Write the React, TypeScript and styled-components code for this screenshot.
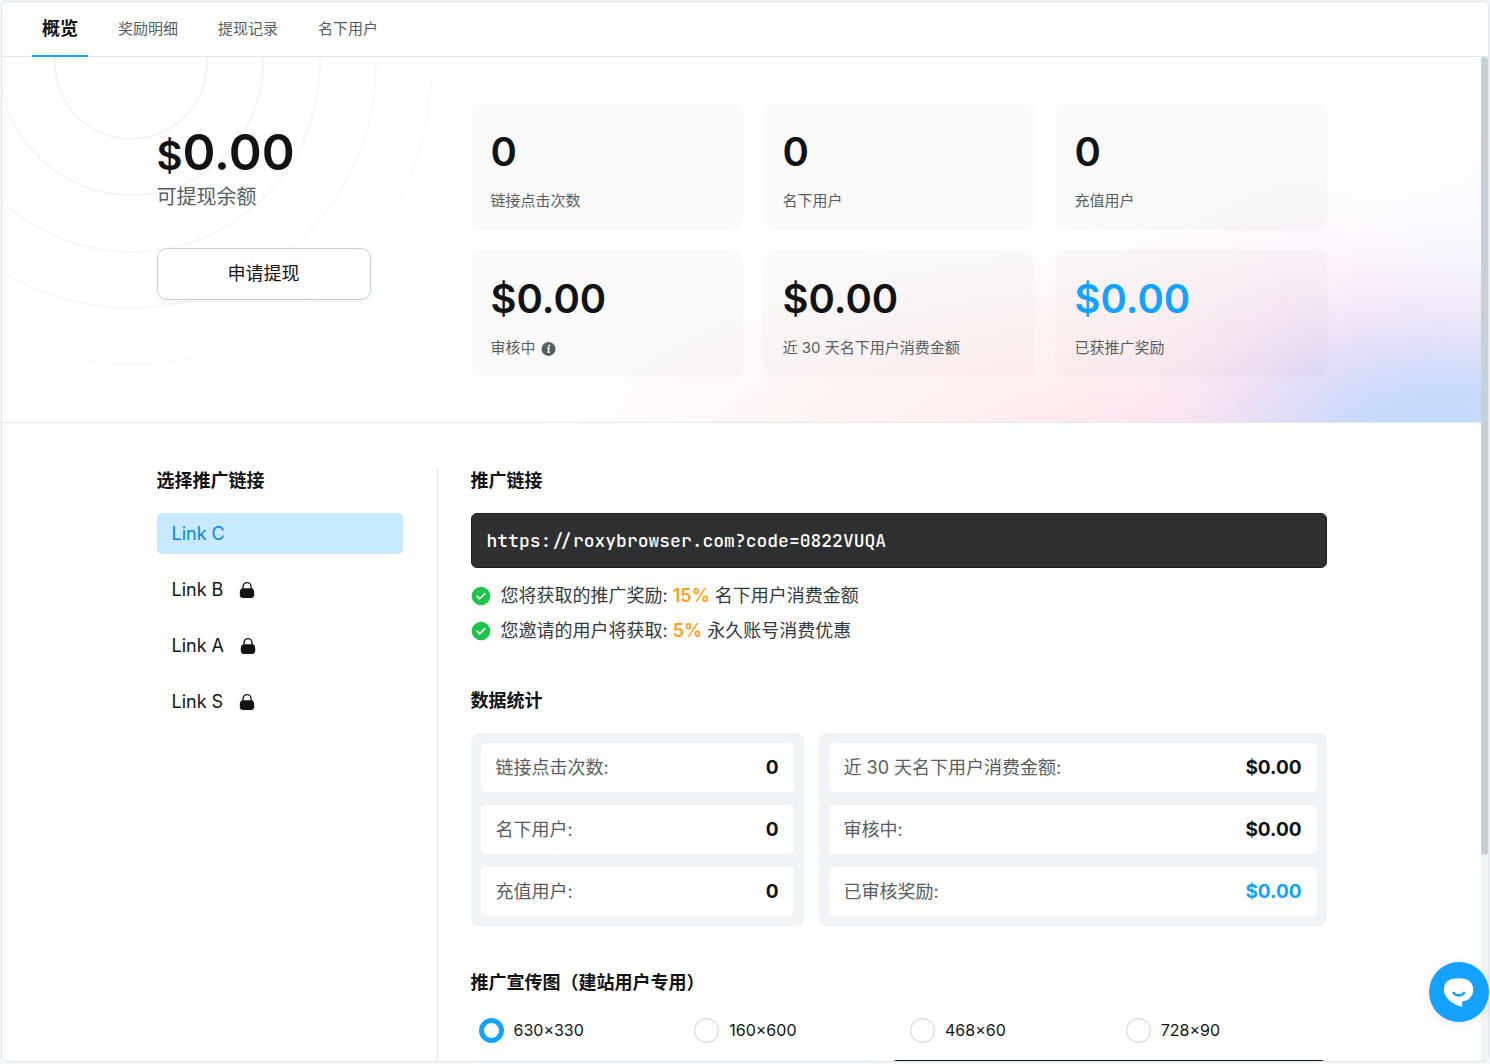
import { useLayoutEffect, useRef, useState } from 'react';
import styled, { createGlobalStyle } from 'styled-components';

const c = {
  page: '#f3f8fc',
  line: '#dfe8ef',
  ink: '#111314',
  soft: '#565e62',
  body: '#333a3e',
  blue: '#14a2ff',
  link: '#0a87e0',
  orange: '#ff9f1a',
  green: '#20c44c',
  panel: '#f0f4f7',
  dark: '#2d2f31',
  ctl: '#c6d1d7',
};

const GlobalStyle = createGlobalStyle`
  *, *::before, *::after { box-sizing: border-box; }
  body {
    margin: 0;
    background: ${c.page};
    color: ${c.ink};
    font-family: Inter, "Noto Sans CJK SC", sans-serif;
    font-size: 18px;
    line-height: 26px;
  }
  button { font: inherit; color: inherit; cursor: pointer; }
  h2, p, ul, dl, dd { margin: 0; padding: 0; }
  ul { list-style: none; }
`;

const Frame = styled.div`
  height: 100vh;
  padding: 1px 1px 2px;
`;

const Window = styled.div`
  display: flex;
  flex-direction: column;
  height: 100%;
  overflow: hidden;
  background: #fff;
  border: 1px solid ${c.line};
  border-radius: 6px;
`;

const TabBar = styled.nav`
  flex: none;
  display: flex;
  gap: 20px;
  height: 55px;
  padding: 0 30px;
  border-bottom: 1px solid ${c.line};
`;

const Tab = styled.button<{ $active?: boolean }>`
  height: 55px;
  padding: 0 10px;
  background: none;
  border: 0;
  border-bottom: 2px solid ${(p) => (p.$active ? c.blue : 'transparent')};
  color: ${(p) => (p.$active ? c.ink : c.soft)};
  font-size: ${(p) => (p.$active ? 18 : 15)}px;
  font-weight: ${(p) => (p.$active ? 700 : 400)};
`;

const Viewport = styled.div`
  flex: 1;
  min-height: 0;
  display: flex;
`;

const Scroller = styled.div`
  flex: 1;
  min-width: 0;
  overflow-y: auto;
  scrollbar-width: none;
`;

const Track = styled.div`
  flex: none;
  width: 7px;
  background: ${c.panel};
`;

const Thumb = styled.div`
  border-radius: 4px;
  background: ${c.ctl};
`;

const Hero = styled.section`
  position: relative;
  overflow: hidden;
  padding: 46px 24px 45px;
  border-bottom: 1px solid ${c.line};
  background:
    radial-gradient(ellipse 230px 130px at 98% 106%, rgba(194, 220, 255, 1), rgba(194, 218, 254, 0.8) 40%, rgba(200, 216, 252, 0.25) 75%, rgba(210, 216, 250, 0)),
    radial-gradient(ellipse 290px 190px at 95% 106%, rgba(216, 214, 247, 0.9), rgba(222, 218, 246, 0.6) 50%, rgba(232, 220, 246, 0.2) 80%, rgba(240, 226, 248, 0)),
    radial-gradient(ellipse 260px 290px at 106% 94%, rgba(216, 228, 254, 0.6), rgba(226, 230, 254, 0.35) 50%, rgba(240, 242, 255, 0)),
    radial-gradient(ellipse 240px 220px at 89% 84%, rgba(247, 226, 249, 0.6), rgba(249, 234, 252, 0.35) 50%, rgba(250, 240, 255, 0)),
    radial-gradient(ellipse 720px 230px at 83% 108%, rgba(255, 224, 232, 1), rgba(255, 234, 234, 0.6) 50%, rgba(255, 250, 246, 0)),
    #fff;
`;

const Rings = styled.svg`
  position: absolute;
  left: 0;
  top: 0;
`;

const Inner = styled.div`
  position: relative;
  display: flex;
  max-width: 1170px;
  margin: 0 auto;
`;

const Balance = styled.div`
  flex: 0 0 314px;
  padding-top: 19px;
`;

const Amount = styled.p`
  font-size: 50px;
  font-weight: 600;
  line-height: 60px;
`;

const Currency = styled.span`
  font-size: 40px;
  line-height: 1;
`;

const BalanceLabel = styled.p`
  color: ${c.soft};
  font-size: 20px;
  line-height: 30px;
`;

const Withdraw = styled.button`
  width: 214px;
  height: 52px;
  margin-top: 36px;
  background: #fff;
  border: 1px solid ${c.ctl};
  border-radius: 10px;
  box-shadow: 0 2px 4px rgba(0, 0, 0, 0.06);
`;

const Cards = styled.div`
  flex: 1;
  display: grid;
  grid-template-columns: repeat(3, 1fr);
  gap: 20px;
`;

const Card = styled.div`
  padding: 25px 20px 17px;
  border-radius: 10px;
  background: rgba(20, 20, 20, 0.02);
`;

const CardValue = styled.p<{ $accent?: boolean }>`
  margin-bottom: 13px;
  color: ${(p) => (p.$accent ? c.blue : c.ink)};
  font-size: 40px;
  font-weight: 600;
  line-height: 48px;
`;

const CardLabel = styled.p`
  display: flex;
  align-items: center;
  gap: 5px;
  color: ${c.soft};
  font-size: 15px;
  line-height: 24px;
`;

const Columns = styled(Inner)`
  padding-top: 45px;
`;

const Aside = styled.aside`
  flex: 0 0 281px;
  padding-right: 34px;
  border-right: 1px solid ${c.line};
`;

const Main = styled.main`
  flex: 1;
  min-width: 0;
  margin-left: 33px;
  padding-bottom: 24px;
`;

const Title = styled.h2`
  font-size: 18px;
  font-weight: 700;
  line-height: 26px;
`;

const LinkList = styled.ul`
  display: grid;
  gap: 15px;
  margin-top: 19px;
`;

const LinkItem = styled.button<{ $active?: boolean }>`
  display: flex;
  align-items: center;
  gap: 15px;
  width: 100%;
  height: 41px;
  padding: 0 15px;
  border: 0;
  border-radius: 5px;
  background: ${(p) => (p.$active ? '#c8eaff' : 'none')};
  color: ${(p) => (p.$active ? c.link : c.ink)};
`;

const UrlBox = styled.div`
  margin-top: 19px;
  padding: 14px 15px;
  border: 1px solid #1b1d1e;
  border-radius: 6px;
  background: ${c.dark};
  color: #fff;
  font-family: "JetBrains Mono", "DejaVu Sans Mono", monospace;
  font-size: 18px;
  font-weight: 500;
  line-height: 25px;
`;

const Perks = styled.ul`
  display: grid;
  gap: 9px;
  margin-top: 15px;
`;

const Perk = styled.li`
  display: flex;
  align-items: center;
  gap: 10px;
  color: ${c.body};
`;

const Rate = styled.strong`
  color: ${c.orange};
  font-weight: 600;
`;

const Block = styled.section`
  margin-top: 44px;
`;

const Stats = styled.div`
  display: grid;
  grid-template-columns: 333fr 508fr;
  gap: 15px;
  margin-top: 19px;
`;

const StatPanel = styled.dl`
  display: grid;
  gap: 13px;
  padding: 10px;
  border-radius: 8px;
  background: ${c.panel};
`;

const StatRow = styled.div`
  display: flex;
  align-items: center;
  justify-content: space-between;
  height: 49px;
  padding: 0 15px;
  border-radius: 5px;
  background: #fff;
`;

const StatName = styled.dt`
  color: ${c.soft};
`;

const StatValue = styled.dd<{ $accent?: boolean }>`
  color: ${(p) => (p.$accent ? c.blue : c.ink)};
  font-size: 19px;
  font-weight: 700;
`;

const Sizes = styled.div`
  display: grid;
  grid-template-columns: repeat(4, 1fr);
  gap: 15px;
  margin-top: 22px;
  padding-left: 8px;
`;

const SizeOption = styled.label`
  display: flex;
  align-items: center;
  gap: 10px;
  font-size: 16px;
  line-height: 25px;
  cursor: pointer;
`;

const Radio = styled.input`
  appearance: none;
  flex: none;
  width: 25px;
  height: 25px;
  margin: 0;
  border: 1px solid ${c.ctl};
  border-radius: 50%;
  background: #fff;
  &:checked { border: 5px solid ${c.blue}; }
`;

const Previews = styled.div`
  display: grid;
  grid-template-columns: 404fr 436fr;
  gap: 16px;
  margin-top: 17px;
`;

const Preview = styled.div<{ $dark?: boolean }>`
  height: 236px;
  border-radius: 6px;
  background: ${(p) => (p.$dark ? '#1b1d1e' : c.panel)};
`;

const Chat = styled.button`
  position: fixed;
  right: 1px;
  bottom: 42px;
  display: grid;
  place-items: center;
  width: 60px;
  height: 60px;
  padding: 0;
  border: 0;
  border-radius: 50%;
  background: ${c.blue};
  box-shadow: 0 2px 14px rgba(0, 0, 0, 0.08);
`;

const LockIcon = () => (
  <svg width="18" height="18" viewBox="0 0 18 18" fill="none" aria-hidden="true">
    <path d="M5 9V5.6a4 4 0 0 1 8 0V9" stroke={c.ink} strokeWidth="1.3" />
    <path d="M4.2 7.2h9.6c1.6.6 2.4 2 2.4 4.2v2.4c0 2-1 3.2-3 3.2H4.8c-2 0-3-1.2-3-3.2v-2.4c0-2.2.8-3.6 2.4-4.2z" fill={c.ink} />
  </svg>
);

const CheckIcon = () => (
  <svg width="20" height="20" viewBox="0 0 20 20" fill="none" aria-hidden="true">
    <circle cx="10" cy="10" r="9.3" fill={c.green} />
    <path d="M6 10.2l2.7 2.6L13.8 7.7" stroke="#fff" strokeWidth="1.6" strokeLinecap="round" strokeLinejoin="round" />
  </svg>
);

const InfoIcon = () => (
  <svg width="15" height="16" viewBox="0 0 15 16" fill="none" role="img" aria-label="info">
    <circle cx="7.5" cy="8.9" r="7" fill={c.soft} />
    <circle cx="8.2" cy="5.6" r="1.1" fill="#fff" />
    <path d="M6 8h2l-.9 4.2h1.5" stroke="#fff" strokeWidth="1.5" strokeLinejoin="round" />
  </svg>
);

const ChatIcon = () => (
  <svg width="32" height="32" viewBox="0 0 32 32" fill="none" aria-hidden="true">
    <path d="M15.500 2.200C23.500 2.200 30.200 5 30.200 13.600c0 6.800-4.400 11.200-11 12v5.200C9.500 28.600.9 22.400.9 13.600.9 5 7.500 2.200 15.500 2.200z" fill="#fff" />
    <path d="M10.600 17c2.600 3.200 7.800 3.200 10.400 0" stroke={c.blue} strokeWidth="2.600" strokeLinecap="round" />
  </svg>
);

const rings = [
  { r: 76, color: '#f3f3f3' },
  { r: 132, color: '#f5f5f5' },
  { r: 189, color: '#f7f7f7' },
  { r: 245, color: '#f9f9f9' },
  { r: 301, color: '#fbfbfb' },
];

const cards = [
  { value: '0', label: '链接点击次数' },
  { value: '0', label: '名下用户' },
  { value: '0', label: '充值用户' },
  { value: '$0.00', label: '审核中', info: true },
  { value: '$0.00', label: '近 30 天名下用户消费金额' },
  { value: '$0.00', label: '已获推广奖励', accent: true },
];

const countStats = [
  { name: '链接点击次数:', value: '0' },
  { name: '名下用户:', value: '0' },
  { name: '充值用户:', value: '0' },
];

const moneyStats = [
  { name: '近 30 天名下用户消费金额:', value: '$0.00' },
  { name: '审核中:', value: '$0.00' },
  { name: '已审核奖励:', value: '$0.00', accent: true },
];

const tabs = ['概览', '奖励明细', '提现记录', '名下用户'];
const links = ['Link C', 'Link B', 'Link A', 'Link S'];
const sizes = ['630×330', '160×600', '468×60', '728×90'];

export default function App() {
  const scroller = useRef<HTMLDivElement>(null);
  const [thumb, setThumb] = useState({ top: 0, height: 0 });
  const [size, setSize] = useState(sizes[0]);

  const measure = () => {
    const el = scroller.current;
    if (!el) return;
    const ratio = el.clientHeight / el.scrollHeight;
    setThumb({
      top: Math.round(el.scrollTop * ratio),
      height: Math.round(el.clientHeight * ratio),
    });
  };

  useLayoutEffect(() => {
    measure();
    window.addEventListener('resize', measure);
    return () => window.removeEventListener('resize', measure);
  }, []);

  return (
    <Frame>
      <GlobalStyle />
      <Window>
        <TabBar>
          {tabs.map((t, i) => (
            <Tab key={t} $active={i === 0}>{t}</Tab>
          ))}
        </TabBar>
        <Viewport>
          <Scroller ref={scroller} onScroll={measure}>
            <Hero>
              <Rings width="440" height="366" fill="none" aria-hidden="true">
                {rings.map((ring) => (
                  <circle key={ring.r} cx="129" cy="6" r={ring.r} stroke={ring.color} strokeWidth="2" />
                ))}
              </Rings>
              <Inner>
                <Balance>
                  <Amount><Currency>$</Currency>0.00</Amount>
                  <BalanceLabel>可提现余额</BalanceLabel>
                  <Withdraw>申请提现</Withdraw>
                </Balance>
                <Cards>
                  {cards.map((card) => (
                    <Card key={card.label}>
                      <CardValue $accent={card.accent}>{card.value}</CardValue>
                      <CardLabel>{card.label}{card.info && <InfoIcon />}</CardLabel>
                    </Card>
                  ))}
                </Cards>
              </Inner>
            </Hero>
            <Columns>
              <Aside>
                <Title>选择推广链接</Title>
                <LinkList>
                  {links.map((name, i) => (
                    <li key={name}>
                      <LinkItem $active={i === 0}>
                        {name}
                        {i > 0 && <LockIcon />}
                      </LinkItem>
                    </li>
                  ))}
                </LinkList>
              </Aside>
              <Main>
                <Title>推广链接</Title>
                <UrlBox>https://roxybrowser.com?code=0822VUQA</UrlBox>
                <Perks>
                  <Perk><CheckIcon /><span>您将获取的推广奖励: <Rate>15%</Rate> 名下用户消费金额</span></Perk>
                  <Perk><CheckIcon /><span>您邀请的用户将获取: <Rate>5%</Rate> 永久账号消费优惠</span></Perk>
                </Perks>
                <Block>
                  <Title>数据统计</Title>
                  <Stats>
                    <StatPanel>
                      {countStats.map((s) => (
                        <StatRow key={s.name}>
                          <StatName>{s.name}</StatName>
                          <StatValue>{s.value}</StatValue>
                        </StatRow>
                      ))}
                    </StatPanel>
                    <StatPanel>
                      {moneyStats.map((s) => (
                        <StatRow key={s.name}>
                          <StatName>{s.name}</StatName>
                          <StatValue $accent={s.accent}>{s.value}</StatValue>
                        </StatRow>
                      ))}
                    </StatPanel>
                  </Stats>
                </Block>
                <Block>
                  <Title>推广宣传图（建站用户专用）</Title>
                  <Sizes>
                    {sizes.map((s) => (
                      <SizeOption key={s}>
                        <Radio type="radio" name="size" checked={size === s} onChange={() => setSize(s)} />
                        {s}
                      </SizeOption>
                    ))}
                  </Sizes>
                  <Previews>
                    <Preview />
                    <Preview $dark />
                  </Previews>
                </Block>
              </Main>
            </Columns>
          </Scroller>
          <Track>
            <Thumb style={{ height: thumb.height, marginTop: thumb.top }} />
          </Track>
        </Viewport>
      </Window>
      <Chat aria-label="chat"><ChatIcon /></Chat>
    </Frame>
  );
}
